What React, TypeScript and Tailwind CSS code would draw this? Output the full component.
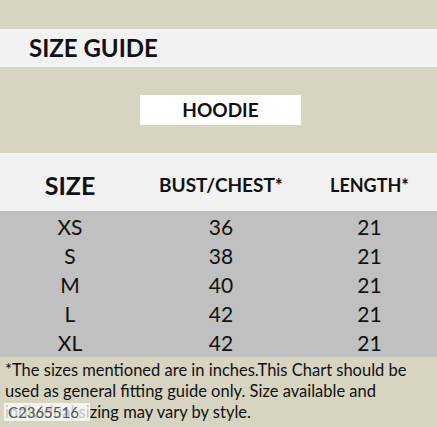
const rows = [
  { size: 'XS', bust: 36, length: 21 },
  { size: 'S', bust: 38, length: 21 },
  { size: 'M', bust: 40, length: 21 },
  { size: 'L', bust: 42, length: 21 },
  { size: 'XL', bust: 42, length: 21 },
];

const App = () => {
  return (
    <div className="w-[437px] h-[427px] overflow-hidden bg-[#d7d5c1] text-[#111] font-['Lato',sans-serif]">
      {/* Title */}
      <div className="h-[29px]" />
      <div className="h-[38px] bg-[#f2f2f2] flex items-center pl-[29px]">
        <h1 className="text-[24px] font-bold leading-none">SIZE GUIDE</h1>
      </div>

      {/* Product name */}
      <div className="h-[86px] grid grid-cols-[140px_161px_1fr] items-center">
        <div />
        <div className="h-[30px] bg-white flex items-center justify-center text-[19px] font-bold">
          HOODIE
        </div>
      </div>

      {/* Table header */}
      <div className="h-[58px] bg-[#f2f2f2] grid grid-cols-[140px_162px_1fr] items-center pt-[7px]">
        <div className="text-center text-[25px] font-bold">SIZE</div>
        <div className="text-center text-[19px] font-bold">BUST/CHEST*</div>
        <div className="text-center text-[18px] font-bold">LENGTH*</div>
      </div>

      {/* Rows */}
      <div className="h-[146px] bg-[#c0c0c0]">
        {rows.map((r) => (
          <div key={r.size} className="h-[29px] grid grid-cols-[140px_162px_1fr] items-center text-[21px]">
            <div className="text-center">{r.size}</div>
            <div className="text-center">{r.bust}</div>
            <div className="text-center">{r.length}</div>
          </div>
        ))}
      </div>

      {/* Footnote */}
      <div className="relative px-[5px] pt-[3px] text-[16.5px] leading-[21px]">
        <p>
          *The sizes mentioned are in inches.This Chart should be used as general fitting guide only. Size available and individual sizing may vary by style.
        </p>
        <div className="absolute left-[4px] top-[46px] w-[86px] h-[18px] bg-white/75 text-[15px] leading-[18px] text-[#555] pl-[4px]">
          C2365516
        </div>
      </div>
    </div>
  );
};

export default App;
